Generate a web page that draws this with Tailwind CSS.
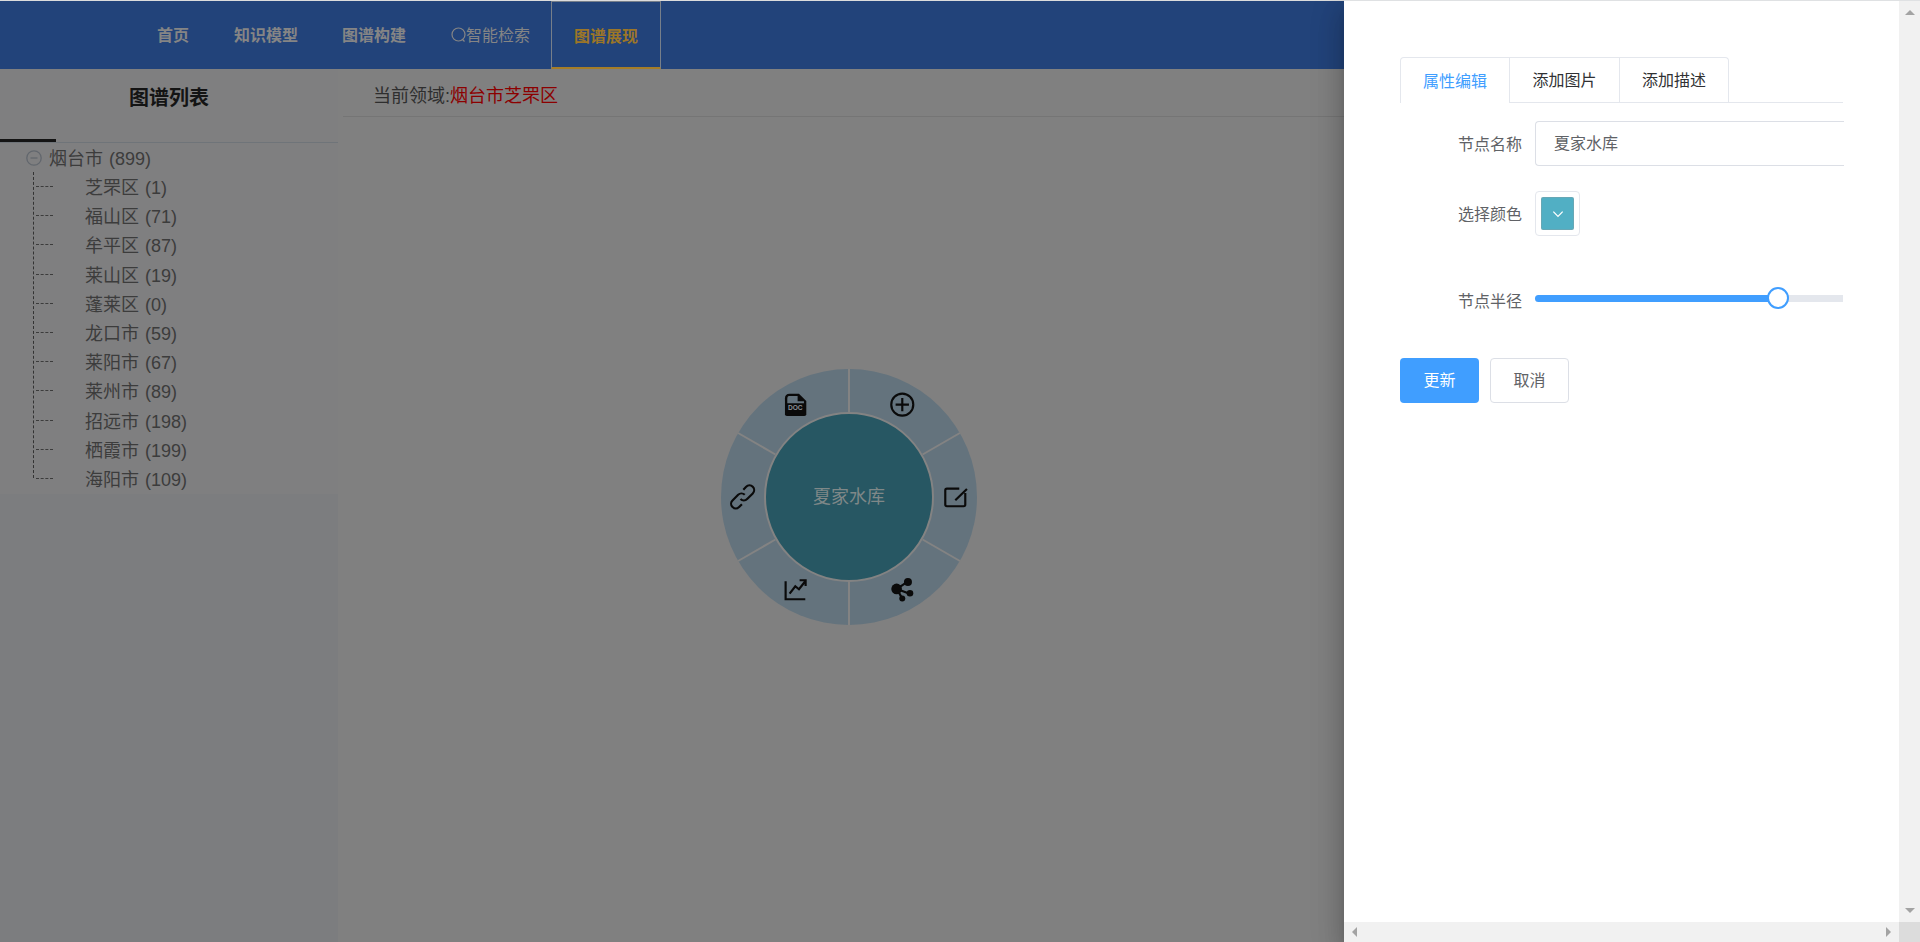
<!DOCTYPE html>
<html lang="zh-CN">
<head>
    <meta charset="UTF-8">
    <title>图谱展现</title>
    <script src="https://cdn.jsdelivr.net/npm/@tailwindcss/browser@4"></script>
</head>
<body class="font-['Liberation_Sans','Noto_Sans_CJK_SC',sans-serif] overflow-hidden">
    <div class="relative h-[942px] w-[1920px] overflow-hidden bg-[#808080] flex flex-col">
        <div class="h-px bg-[#dcdcdc]"></div>

        <!-- Header -->
        <header class="h-[68px] bg-[#22437a] pl-[136px] flex text-[16px] font-bold text-[#858585]">
            <a class="pl-[21px] pr-[23px] pt-[2px] flex items-center">首页</a>
            <a class="px-[22px] pt-[2px] flex items-center">知识模型</a>
            <a class="px-[22px] pt-[2px] flex items-center">图谱构建</a>
            <a class="pl-[23px] pr-[21px] pt-[2px] flex items-center font-normal">
                <svg class="w-[15px] h-[16px] -mt-0.5" viewBox="0 0 15 16" fill="none" stroke="#858585" stroke-width="1.2"><circle cx="7.5" cy="7.5" r="6.5"/><path d="M11 12l2.5 2.5"/></svg>智能检索
            </a>
            <a class="w-[110px] flex items-center justify-center border border-b-0 border-[#777f8a] border-b-[2px] border-b-[#a57d28] text-[#9c7628] pt-[4px]">图谱展现</a>
        </header>

        <div class="flex flex-1 min-h-0">
            <!-- Left panel -->
            <aside class="w-[338px] bg-[#7c7d7f]">
                <div class="h-[425px] bg-[#7f7f80]">
                    <h2 class="h-[56px] pt-[2px] flex items-center justify-center text-[20px] font-bold text-[#141414]">图谱列表</h2>
                    <div class="mt-[14px] h-[3px] w-14 bg-[#141414]"></div>
                    <div class="h-px bg-[#6f7479]"></div>
                    <div class="h-[29px] flex items-center pl-[26px] text-[18px] text-[#3c3c3c] [word-spacing:1px]">
                        <svg class="mr-[7px]" width="16" height="16" viewBox="0 0 16 16" fill="none" stroke="#62676d" stroke-width="1.3"><circle cx="8" cy="8" r="7.2"/><path d="M4.5 8H11.5"/></svg>
                        <span class="pt-1">烟台市 (899)</span>
                    </div>
                    <ul class="relative text-[18px] text-[#3c3c3c] [word-spacing:1px]">
                        <span class="absolute left-[33px] top-0 bottom-[15px] border-l border-dashed border-[#333]"></span>
                        <li class="h-[29.2px] flex items-center pl-[36px]"><span class="w-[17px] mr-[32px] border-t border-dashed border-[#3c3c3c]"></span><span class="pt-1">芝罘区 (1)</span></li>
                        <li class="h-[29.2px] flex items-center pl-[36px]"><span class="w-[17px] mr-[32px] border-t border-dashed border-[#3c3c3c]"></span><span class="pt-1">福山区 (71)</span></li>
                        <li class="h-[29.2px] flex items-center pl-[36px]"><span class="w-[17px] mr-[32px] border-t border-dashed border-[#3c3c3c]"></span><span class="pt-1">牟平区 (87)</span></li>
                        <li class="h-[29.2px] flex items-center pl-[36px]"><span class="w-[17px] mr-[32px] border-t border-dashed border-[#3c3c3c]"></span><span class="pt-1">莱山区 (19)</span></li>
                        <li class="h-[29.2px] flex items-center pl-[36px]"><span class="w-[17px] mr-[32px] border-t border-dashed border-[#3c3c3c]"></span><span class="pt-1">蓬莱区 (0)</span></li>
                        <li class="h-[29.2px] flex items-center pl-[36px]"><span class="w-[17px] mr-[32px] border-t border-dashed border-[#3c3c3c]"></span><span class="pt-1">龙口市 (59)</span></li>
                        <li class="h-[29.2px] flex items-center pl-[36px]"><span class="w-[17px] mr-[32px] border-t border-dashed border-[#3c3c3c]"></span><span class="pt-1">莱阳市 (67)</span></li>
                        <li class="h-[29.2px] flex items-center pl-[36px]"><span class="w-[17px] mr-[32px] border-t border-dashed border-[#3c3c3c]"></span><span class="pt-1">莱州市 (89)</span></li>
                        <li class="h-[29.2px] flex items-center pl-[36px]"><span class="w-[17px] mr-[32px] border-t border-dashed border-[#3c3c3c]"></span><span class="pt-1">招远市 (198)</span></li>
                        <li class="h-[29.2px] flex items-center pl-[36px]"><span class="w-[17px] mr-[32px] border-t border-dashed border-[#3c3c3c]"></span><span class="pt-1">栖霞市 (199)</span></li>
                        <li class="h-[29.2px] flex items-center pl-[36px]"><span class="w-[17px] mr-[32px] border-t border-dashed border-[#3c3c3c]"></span><span class="pt-1">海阳市 (109)</span></li>
                    </ul>
                </div>
            </aside>

            <!-- Graph area -->
            <main class="relative flex-1 ml-[5px]">
                <div class="h-[48px] pl-[30px] pt-[7px] flex items-center border-b border-[#757575] text-[18px] text-[#2e2e2e]">当前领域:<span class="text-[#8c0000]">烟台市芝罘区</span></div>

                <svg class="absolute left-[376px] top-[298px]" width="260" height="260" viewBox="0 0 260 260">
                    <circle cx="130" cy="130" r="128" fill="#64737d"/>
                    <g stroke="#838383" stroke-width="2">
                        <path d="M130 45V2M130 215V258M203.6 87.5L240.9 66M203.6 172.5L240.9 194M56.4 87.5L19.1 66M56.4 172.5L19.1 194"/>
                    </g>
                    <circle cx="130" cy="130" r="84" fill="#275763" stroke="#838383" stroke-width="2"/>
                    <text x="130" y="136" text-anchor="middle" font-size="18" fill="#7f8888">夏家水库</text>
                    <!-- icons, drawn at 3x -->
                    <g transform="translate(-18.7,-16.7) scale(.3333)" fill="none" stroke="#0a0a0a" stroke-width="6.5">
                        <circle cx="606" cy="163" r="33"/>
                        <path d="M606 143V183M586 163H626"/>
                        <path d="M777 415H740Q735 415 735 420V463Q735 468 740 468H790Q795 468 795 463V428M765 450L800 416"/>
                        <path d="M256 693V747H315M268 730L285 708L296 717L315 693M298 690H316V707"/>
                        <g transform="rotate(-45 127 440)">
                            <path d="M136 440a14 14 0 0 0 -14 -14H98a14 14 0 0 0 0 28H110"/>
                            <path d="M118 440a14 14 0 0 0 14 14H156a14 14 0 0 0 0 -28H144"/>
                        </g>
                        <path d="M590 716L622 694M590 716L626 730M590 716L606 745"/>
                        <g fill="#0a0a0a" stroke="none">
                            <circle cx="589" cy="716" r="16"/>
                            <circle cx="623" cy="695" r="12"/>
                            <circle cx="629" cy="729" r="10"/>
                            <circle cx="606" cy="745" r="9"/>
                            <path d="M268 130H296L318 152V192Q318 197 312 197H260Q254 197 254 192V144Q254 130 268 130Z"/>
                        </g>
                        <path d="M266 137H292V153H311V159H261V146Q261 137 266 137Z" fill="#64737d" stroke="none"/>
                        <text x="285" y="179" text-anchor="middle" font-size="20" font-weight="700" fill="#8a9096" stroke="none" font-family="Liberation Sans">DOC</text>
                    </g>
                </svg>
            </main>
        </div>

        <!-- Drawer -->
        <div class="absolute right-0 top-0 bottom-0 w-[576px] bg-white shadow-[0_8px_10px_-5px_rgba(0,0,0,.2),0_16px_24px_2px_rgba(0,0,0,.14),0_6px_30px_5px_rgba(0,0,0,.12)] flex flex-col border-t border-[#dfe1e3]">
            <div class="flex flex-1 min-h-0">
                <div class="flex-1 overflow-hidden pt-[56px] pl-[56px] pr-[56px] text-[16px] text-[#606266]">
                    <div class="flex h-[46px] border-b border-[#e4e7ed]">
                        <div class="w-[110px] h-[46px] pt-[2px] flex items-center justify-center border border-b-0 border-[#e4e7ed] rounded-tl-[4px] bg-white text-[#409eff]">属性编辑</div>
                        <div class="w-[110px] pt-[2px] flex items-center justify-center border-t border-r border-[#e4e7ed] text-[#303133]">添加图片</div>
                        <div class="w-[109px] pt-[2px] flex items-center justify-center border-t border-r border-[#e4e7ed] rounded-tr-[4px] text-[#303133]">添加描述</div>
                    </div>
                    <div class="mt-[18px] flex items-center">
                        <label class="w-[135px] pr-[13px] pt-[2px] text-right">节点名称</label>
                        <div class="flex-1 -mr-px h-[45px] pl-[18px] flex items-center border border-r-0 border-[#dcdfe6] rounded-l-[4px]">夏家水库</div>
                    </div>
                    <div class="mt-[25px] flex items-center">
                        <label class="w-[135px] pr-[13px] pt-[2px] text-right">选择颜色</label>
                        <div class="w-[45px] h-[45px] p-[5px] border border-[#e4e7ed] rounded-[4px]">
                            <div class="h-full rounded-[2px] bg-[#51afc4] border border-[#8a9a9f]/40 flex items-center justify-center">
                                <svg width="14" height="14" viewBox="0 0 12 12" fill="none" stroke="#fff" stroke-width="1.1"><path d="M2 4l4 4 4-4"/></svg>
                            </div>
                        </div>
                    </div>
                    <div class="mt-[46px] flex items-center h-[40px]">
                        <label class="w-[135px] pr-[13px] text-right">节点半径</label>
                        <div class="relative flex-1 h-[7px] -mt-[8px] bg-[#e4e7ed] rounded-l-[4px]">
                            <div class="h-full w-[243px] bg-[#409eff] rounded-l-[4px]"></div>
                            <span class="absolute left-[232px] -top-[8px] w-[22px] h-[22px] rounded-full bg-white border-2 border-[#409eff]"></span>
                        </div>
                    </div>
                    <div class="mt-[36px] flex gap-[11px]">
                        <button class="w-[79px] h-[45px] rounded-[4px] bg-[#409eff] text-white">更新</button>
                        <button class="w-[79px] h-[45px] rounded-[4px] border border-[#dcdfe6] bg-white">取消</button>
                    </div>
                </div>
                <!-- vertical scrollbar -->
                <div class="w-[21px] bg-[#f1f1f1] flex flex-col justify-between items-center py-[9px]">
                    <span class="w-0 h-0 border-x-[5px] border-x-transparent border-b-[5px] border-b-[#a3a3a3]"></span>
                    <span class="w-0 h-0 border-x-[5px] border-x-transparent border-t-[5px] border-t-[#a3a3a3]"></span>
                </div>
            </div>
            <!-- horizontal scrollbar -->
            <div class="h-[20px] flex">
                <div class="flex-1 bg-[#f1f1f1] flex justify-between items-center px-[8px]">
                    <span class="w-0 h-0 border-y-[5px] border-y-transparent border-r-[5px] border-r-[#a3a3a3]"></span>
                    <span class="w-0 h-0 border-y-[5px] border-y-transparent border-l-[5px] border-l-[#a3a3a3]"></span>
                </div>
                <div class="w-[21px] bg-[#dcdcdc]"></div>
            </div>
        </div>
    </div>
</body>
</html>
